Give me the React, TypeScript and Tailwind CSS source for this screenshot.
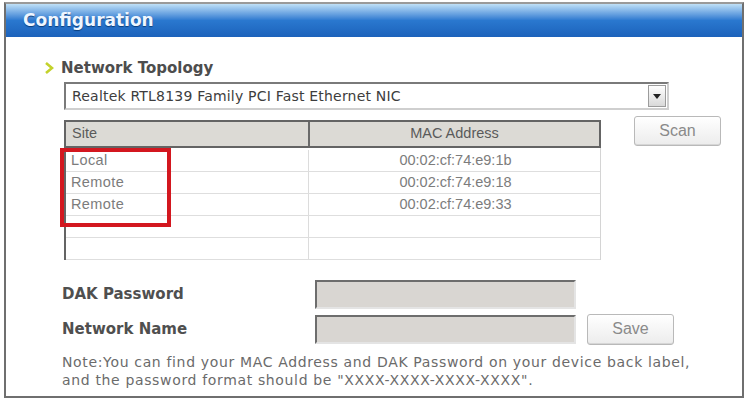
const rows = [
  { site: "Local", mac: "00:02:cf:74:e9:1b" },
  { site: "Remote", mac: "00:02:cf:74:e9:18" },
  { site: "Remote", mac: "00:02:cf:74:e9:33" },
  { site: "", mac: "" },
  { site: "", mac: "" },
];

const dejavu = { fontFamily: '"DejaVu Sans", Verdana, sans-serif' };

const XpButton = ({ label, className = "" }: { label: string; className?: string }) => (
  <button
    className={`shrink-0 rounded-[3px] border border-[#b9b9b9] bg-gradient-to-b from-white to-[#ececec] text-[16px] text-[#8a8a8a] shadow-[inset_0_-1px_0_#d6d6d6] ${className}`}
  >
    {label}
  </button>
);

const App = () => {
  return (
    <div
      className="h-[401px] w-[746px] bg-white pl-[4px] pt-[2px]"
      style={{ fontFamily: '"Liberation Sans", Arial, sans-serif' }}
    >
      <div className="flex h-[396px] w-[740px] flex-col border-2 border-[#6f6f6f] border-t-[#9a9a9a]">
        {/* title bar */}
        <div className="flex h-[33px] shrink-0 items-center bg-gradient-to-b from-[#bfe0f7] via-[#2a78cf] to-[#1c62bb] pl-[17px]">
          <span
            className="text-[17px] font-bold text-[#eef6ff] [text-shadow:0_1px_1px_#0b3d7a]"
            style={dejavu}
          >
            Configuration
          </span>
        </div>

        <div className="flex flex-col pl-[37px] pt-[22px]">
          <div className="flex h-[18px] items-center gap-[7px] pl-[1px]">
            <svg width="10" height="12" viewBox="0 0 10 12">
              <path d="M2 1 L8 6 L2 11" fill="none" stroke="#c3d22c" strokeWidth="2.6" />
            </svg>
            <span className="text-[15px] font-bold leading-[18px] text-[#4d4d4d]" style={dejavu}>
              Network Topology
            </span>
          </div>

          {/* select */}
          <div className="ml-[21px] mt-[5px] flex h-[28px] w-[605px] items-center border-2 border-[#7a7a7a] border-b-[#cfcfcf] border-r-[#cfcfcf] bg-white">
            <span className="flex-1 pl-[6px] text-[14px] tracking-[0.2px] text-[#3d3d3d]" style={dejavu}>
              Realtek RTL8139 Family PCI Fast Ethernet NIC
            </span>
            <div className="mr-[1px] flex h-[22px] w-[18px] items-center justify-center border border-[#9c9c9c] bg-gradient-to-b from-white to-[#d9d9d9]">
              <svg width="8" height="5" viewBox="0 0 8 5">
                <path d="M0 0 H8 L4 5 Z" fill="#222" />
              </svg>
            </div>
          </div>

          {/* table + scan */}
          <div className="ml-[21px] mt-[10px] flex items-start">
            <div className="relative w-[537px] shrink-0">
              <div className="flex h-[28px] border-2 border-[#646464] bg-[#dcdad5] text-[14.5px] text-[#5a5a5a]">
                <div className="flex w-[244px] items-center border-r-2 border-[#6a6a6a] pl-[6px]">Site</div>
                <div className="flex flex-1 items-center justify-center">MAC Address</div>
              </div>
              <div className="border-l-2 border-r border-[#646464] border-r-[#d4d4d4] pt-[2px]">
                {rows.map((r, i) => (
                  <div key={i} className="flex h-[22px] border-b border-[#dedede] text-[14.5px] text-[#7c7c7c]">
                    <div className="flex w-[243px] items-center border-r border-[#dcdcdc] pl-[5px] tracking-[0.4px]">
                      {r.site}
                    </div>
                    <div className="flex flex-1 items-center justify-center pl-[2px]">{r.mac}</div>
                  </div>
                ))}
              </div>
              <div className="absolute left-[-4px] top-[28px] h-[79px] w-[111px] border-4 border-[#d3171f]" />
            </div>
            <XpButton label="Scan" className="ml-[33px] mt-[-4px] h-[30px] w-[87px]" />
          </div>
        </div>

        {/* passwords */}
        <div className="mt-[19px] flex flex-col pl-[56px]">
          <div className="flex h-[30px] items-center">
            <span className="w-[253px] text-[15px] font-bold text-[#4f4f4f]" style={dejavu}>
              DAK Password
            </span>
            <div className="h-[29px] w-[261px] border-2 border-[#6d6d6d] border-b-[#e4e4e4] border-r-[#e4e4e4] bg-[#d9d6d2]" />
          </div>
          <div className="mt-[5px] flex h-[30px] items-center">
            <span className="w-[253px] text-[15px] font-bold text-[#4f4f4f]" style={dejavu}>
              Network Name
            </span>
            <div className="h-[29px] w-[261px] border-2 border-[#6d6d6d] border-b-[#e4e4e4] border-r-[#e4e4e4] bg-[#d9d6d2]" />
            <XpButton label="Save" className="ml-[11px] h-[31px] w-[87px]" />
          </div>
          <p
            className="mt-[9px] text-[14px] leading-[18px] tracking-[0.65px] text-[#6b6b6b]"
            style={dejavu}
          >
            Note:You can find your MAC Address and DAK Password on your device back label,
            <br />
            and the password format should be "XXXX-XXXX-XXXX-XXXX".
          </p>
        </div>
      </div>
    </div>
  );
};

export default App;
